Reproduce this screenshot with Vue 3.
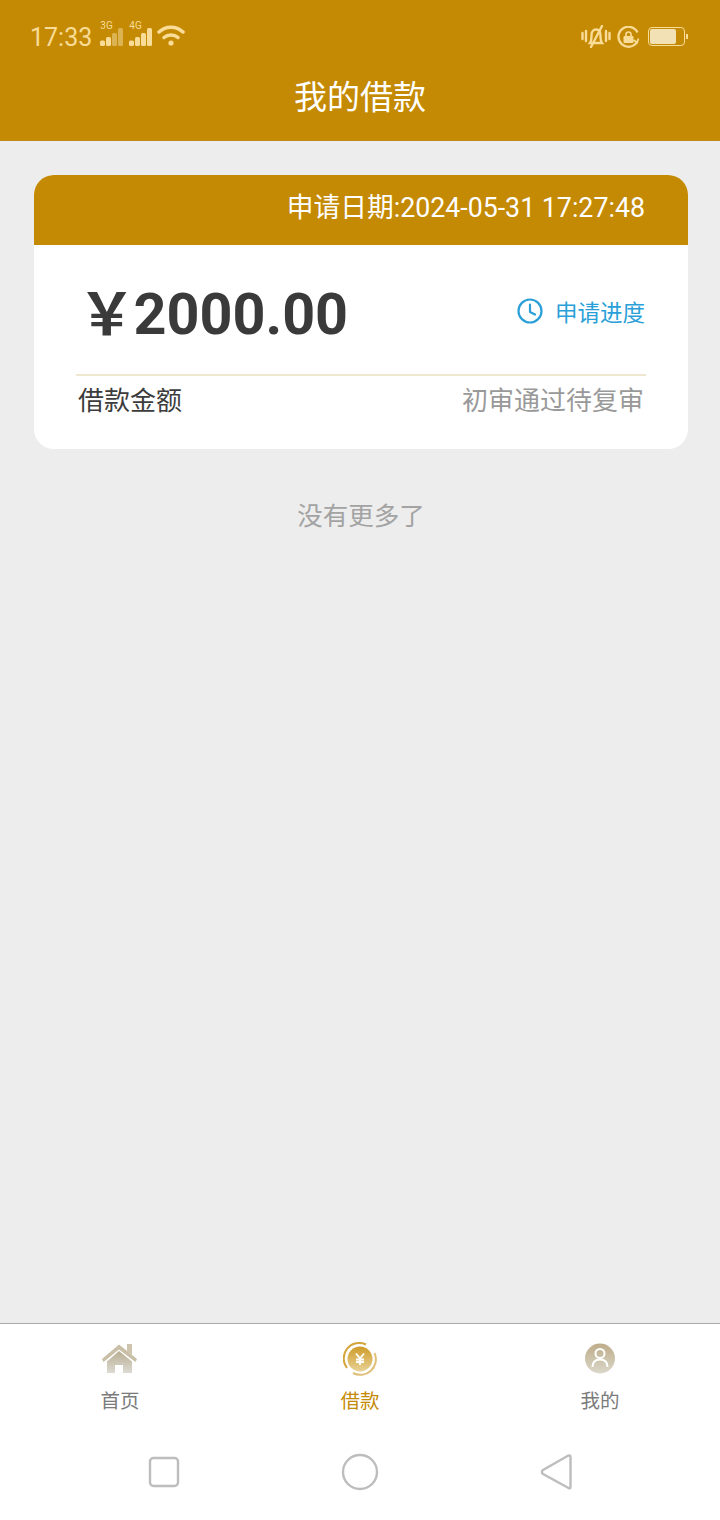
<template>
  <div class="page">
    <header class="top">
      <div class="status">
        <div class="status-left">
          <span class="time">17:33</span>
          <div class="signal">
            <span class="net">3G</span>
            <svg width="23" height="18" viewBox="0 0 23 18">
              <rect x="0" y="12.500" width="5" height="5.500" rx="1.500" fill="#f8dc97" />
              <rect x="6" y="9" width="5" height="9" rx="1.500" fill="#f8dc97" />
              <rect x="12" y="5" width="5" height="13" rx="1.500" fill="#dcb353" />
              <rect x="18" y="0" width="5" height="18" rx="1.500" fill="#dcb353" />
            </svg>
          </div>
          <div class="signal">
            <span class="net">4G</span>
            <svg width="23" height="18" viewBox="0 0 23 18">
              <rect x="0" y="12.500" width="5" height="5.500" rx="1.500" fill="#f8dc97" />
              <rect x="6" y="9" width="5" height="9" rx="1.500" fill="#f8dc97" />
              <rect x="12" y="5" width="5" height="13" rx="1.500" fill="#f8dc97" />
              <rect x="18" y="0" width="5" height="18" rx="1.500" fill="#f8dc97" />
            </svg>
          </div>
          <svg class="wifi" width="28" height="21" viewBox="0 0 28 21" fill="none" stroke="#f8dc97" stroke-width="3.500" stroke-linecap="round">
            <path d="M2 7 C9 .5 19 .5 26 7" />
            <path d="M7 12.500 C11 9 17 9 21 12.500" />
            <circle cx="14" cy="18" r="2.600" fill="#f8dc97" stroke="none" />
          </svg>
        </div>
        <div class="status-right">
          <svg width="30" height="23" viewBox="0 0 30 23" fill="none" stroke="#f8dc97" stroke-width="2.400" stroke-linecap="round">
            <path d="M1.500 8v6M5 6v10M25 6v10M28.500 8v6" />
            <path d="M9 18c1.500-2 1.500-5 1.500-7.500 0-4 2-6 4.500-6s4.500 2 4.500 6c0 2.500 0 5.500 1.500 7.500z" />
            <path d="M10 22L21 1" />
          </svg>
          <svg width="23" height="22" viewBox="0 0 23 22" fill="none" stroke="#f8dc97" stroke-width="2.200">
            <path d="M20 16A10 10 0 1 1 20.500 6.500" />
            <path d="M21.500 12.500L20 16.500 16.500 14" stroke-width="1.800" />
            <rect x="6.500" y="10" width="10" height="7" rx="1" fill="#f8dc97" stroke="none" />
            <path d="M9 10V8.500a2.500 2.500 0 0 1 5 0V10" stroke-width="1.600" />
          </svg>
          <div class="battery">
            <div class="battery-shell"><div class="battery-fill"></div></div>
            <div class="battery-cap"></div>
          </div>
        </div>
      </div>
      <h1 class="title">我的借款</h1>
    </header>

    <main class="content">
      <section class="card">
        <div class="card-head">申请日期:2024-05-31 17:27:48</div>
        <div class="card-body">
          <div class="amount-row">
            <div class="amount"><span class="yen">&#xFFE5;</span>2000.00</div>
            <div class="progress">
              <svg width="26" height="26" viewBox="0 0 26 26" fill="none" stroke="#2a9fd8" stroke-width="2.200" stroke-linecap="round" stroke-linejoin="round">
                <circle cx="13" cy="13" r="11.500" />
                <path d="M13 6.500V14l5 2.500" />
              </svg>
              <span>申请进度</span>
            </div>
          </div>
          <div class="info-row">
            <span class="info-label">借款金额</span>
            <span class="info-state">初审通过待复审</span>
          </div>
        </div>
      </section>
      <p class="no-more">没有更多了</p>
    </main>

    <nav class="tabs">
      <div v-for="tab in tabs" :key="tab.label" class="tab" :class="{ active: tab.active }">
        <svg v-if="tab.icon === 'home'" width="40" height="34" viewBox="0 0 40 34">
          <defs>
            <linearGradient id="homeFill" x1="0" y1="0" x2="0" y2="1">
              <stop offset="0" stop-color="#b9ae93" />
              <stop offset="1" stop-color="#dcdad2" />
            </linearGradient>
          </defs>
          <path d="M27 2h5v11l-5-4z" fill="#cfc5ae" />
          <path d="M2 17L19 2.500l18 14.500-1.500 3L19 7.500 3.500 20z" fill="#c9bfa6" />
          <path d="M7 19.500L19 9l13 10.500V31H23V23h-8v8H7z" fill="url(#homeFill)" />
        </svg>
        <svg v-else-if="tab.icon === 'loan'" width="34" height="34" viewBox="0 0 34 34">
          <defs>
            <linearGradient id="loanFill" x1="0" y1="0" x2="0" y2="1">
              <stop offset="0" stop-color="#cf9c28" />
              <stop offset="1" stop-color="#e8d297" />
            </linearGradient>
          </defs>
          <circle cx="17" cy="17" r="12.500" fill="url(#loanFill)" />
          <path d="M23 2.500A15.500 15.500 0 0 0 4 26" fill="none" stroke="#d5a63d" stroke-width="2" />
          <path d="M31.500 11A15.500 15.500 0 0 1 10 31" fill="none" stroke="#e0c079" stroke-width="2" />
          <path d="M13 11.500L17 16.500l4-5M17 16.500V23M13 17.500h8M13 20h8" fill="none" stroke="#fff" stroke-width="1.800" />
        </svg>
        <svg v-else width="34" height="34" viewBox="0 0 34 34">
          <defs>
            <linearGradient id="userFill" x1="0" y1="0" x2="0" y2="1">
              <stop offset="0" stop-color="#bdac88" />
              <stop offset="1" stop-color="#dbd7ca" />
            </linearGradient>
          </defs>
          <circle cx="17" cy="16.500" r="15" fill="url(#userFill)" />
          <circle cx="17" cy="11.500" r="4.500" fill="none" stroke="#fff" stroke-width="2" />
          <path d="M9.500 25c0-5 3-7.500 7.500-7.500s7.500 2.500 7.500 7.500" fill="none" stroke="#fff" stroke-width="2" />
        </svg>
        <span class="tab-label">{{ tab.label }}</span>
      </div>
    </nav>

    <div class="sys-nav">
      <svg width="32" height="32" viewBox="0 0 32 32" fill="none" stroke="#bdbdbd" stroke-width="2.400">
        <rect x="2" y="2" width="28" height="28" rx="3.500" />
      </svg>
      <svg width="38" height="38" viewBox="0 0 38 38" fill="none" stroke="#bdbdbd" stroke-width="2.400">
        <circle cx="19" cy="19" r="17" />
      </svg>
      <svg width="32" height="38" viewBox="0 0 32 38" fill="none" stroke="#bdbdbd" stroke-width="2.400" stroke-linejoin="round">
        <path d="M29 2.500c1 0 1.500 .5 1.500 1.500v30c0 1-.7 1.800-2 1L3 21c-1.500-1-1.500-3 0-4L27.500 3c.5-.3 1-.5 1.500-.5z" />
      </svg>
    </div>
  </div>
</template>

<script setup>
const tabs = [
  { label: '首页', icon: 'home' },
  { label: '借款', icon: 'loan', active: true },
  { label: '我的', icon: 'user' }
]
</script>

<style>
html,
body {
  margin: 0;
  background: #ededed;
}
</style>

<style scoped>
.page {
  width: 720px;
  height: 1520px;
  display: flex;
  flex-direction: column;
  background: #ededed;
  font-family: Roboto, "Noto Sans CJK SC", sans-serif;
  overflow: hidden;
}

.top {
  height: 141px;
  box-sizing: border-box;
  background: #c58a04;
  border-bottom: 1px solid #bd8a17;
}

.status {
  height: 74px;
  box-sizing: border-box;
  padding: 0 32px 1px 30px;
  display: flex;
  align-items: center;
  justify-content: space-between;
}

.status-left {
  display: flex;
  align-items: center;
}

.time {
  font-size: 25px;
  line-height: 30px;
  margin-top: 2px;
  color: #f8dc97;
}

.signal {
  position: relative;
  width: 23px;
  height: 21px;
  margin-left: 8px;
  display: flex;
  align-items: flex-end;
  margin-top: -3px;
}

.signal + .signal {
  margin-left: 6px;
}

.net {
  position: absolute;
  left: 0;
  top: -5px;
  font-size: 10px;
  line-height: 11px;
  color: #f8dc97;
}

.wifi {
  margin-left: 5px;
  margin-top: -2px;
}

.status-right {
  display: flex;
  align-items: center;
  gap: 6px;
}

.battery {
  display: flex;
  align-items: center;
  margin-left: 2px;
}

.battery-shell {
  width: 37px;
  height: 19px;
  box-sizing: border-box;
  border: 1.500px solid #f8dc97;
  border-radius: 4px;
  padding: 1px;
}

.battery-fill {
  width: 26px;
  height: 100%;
  background: #f2e1b4;
  border-radius: 2px;
}

.battery-cap {
  width: 2px;
  height: 5px;
  margin-left: 1px;
  background: #f8dc97;
}

.title {
  margin: 1px 0 0;
  text-align: center;
  font-size: 33px;
  line-height: 46px;
  font-weight: 400;
  color: #fff;
}

.content {
  flex: 1;
  padding: 34px 32px 0 34px;
}

.card {
  border-radius: 20px;
  background: #fff;
  overflow: hidden;
}

.card-head {
  height: 70px;
  box-sizing: border-box;
  padding: 0 43px 9px 0;
  display: flex;
  align-items: center;
  justify-content: flex-end;
  background: #c58a04;
  color: #fff;
  font-size: 26.750px;
}

.card-body {
  height: 204px;
  box-sizing: border-box;
  padding: 0 42px;
}

.amount-row {
  height: 131px;
  box-sizing: border-box;
  padding: 7px 1px 0 0;
  display: flex;
  align-items: center;
  justify-content: space-between;
  border-bottom: 2px solid #efe8d0;
}

.amount {
  font-size: 57.500px;
  font-weight: 700;
  color: #3a3a3a;
  display: flex;
  align-items: center;
  margin-top: 2px;
}

.yen {
  font-family: "Noto Sans CJK SC", sans-serif;
  line-height: 1;
  margin: 0 -2px 6px 2px;
}

.progress {
  display: flex;
  align-items: center;
  gap: 12px;
  padding-bottom: 5px;
  color: #2a9fd8;
  font-size: 22.500px;
}

.info-row {
  display: flex;
  justify-content: space-between;
  align-items: center;
  height: 44px;
  padding: 0 2px;
  font-size: 26px;
}

.info-label {
  color: #3c3c3c;
}

.info-state {
  color: #999;
}

.no-more {
  margin: 47px 0 0;
  text-align: center;
  font-size: 25.500px;
  line-height: 40px;
  color: #a3a3a3;
}

.tabs {
  height: 110px;
  box-sizing: border-box;
  display: flex;
  background: #fff;
  border-top: 1px solid #aaa;
}

.tab {
  flex: 1;
  padding-top: 18px;
  display: flex;
  flex-direction: column;
  align-items: center;
}

.tab-label {
  margin-top: 12px;
  font-size: 19.500px;
  line-height: 28px;
  color: #7b7b7b;
}

.tab.active .tab-label {
  color: #c58a04;
}

.sys-nav {
  height: 87px;
  box-sizing: border-box;
  padding: 0 148px 10px;
  display: flex;
  align-items: center;
  justify-content: space-between;
  background: #fff;
}
</style>
